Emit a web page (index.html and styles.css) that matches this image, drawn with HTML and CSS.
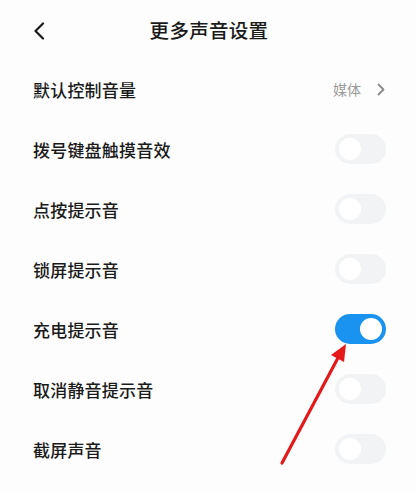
FILE: index.html
```html
<!DOCTYPE html>
<html lang="zh-CN">
<head>
<meta charset="utf-8">
<link rel="stylesheet" href="styles.css">
</head>
<body>
<div class="page">
  <header class="header">
    <svg class="back" width="12" height="18" viewBox="0 0 12 18"><path d="M10 1.5 L2.5 9 L10 16.5" fill="none" stroke="#1a1a1a" stroke-width="2.2" stroke-linecap="round" stroke-linejoin="round"/></svg>
    <h1 class="title">更多声音设置</h1>
  </header>
  <ul class="list">
    <li class="row"><span class="label">默认控制音量</span><span class="value">媒体<svg class="chev" width="8" height="13" viewBox="0 0 8 13"><path d="M1.5 1.5 L6.5 6.5 L1.5 11.5" fill="none" stroke="#8a8a8a" stroke-width="1.8" stroke-linecap="round" stroke-linejoin="round"/></svg></span></li>
    <li class="row"><span class="label">拨号键盘触摸音效</span><span class="toggle"><span class="knob"></span></span></li>
    <li class="row"><span class="label">点按提示音</span><span class="toggle"><span class="knob"></span></span></li>
    <li class="row"><span class="label">锁屏提示音</span><span class="toggle"><span class="knob"></span></span></li>
    <li class="row"><span class="label">充电提示音</span><span class="toggle on"><span class="knob"></span></span></li>
    <li class="row"><span class="label">取消静音提示音</span><span class="toggle"><span class="knob"></span></span></li>
    <li class="row"><span class="label">截屏声音</span><span class="toggle"><span class="knob"></span></span></li>
  </ul>
  <svg class="arrow" width="416" height="492" viewBox="0 0 416 492">
    <line x1="282" y1="463" x2="339" y2="356" stroke="#e41a1a" stroke-width="3.2" stroke-linecap="round"/>
    <polygon points="346,344 331,355 344,362" fill="#e41a1a"/>
  </svg>
</div>
</body>
</html>
```
FILE: styles.css
```css
html, body { margin: 0; padding: 0; background: #fdfdfd; }
body { font-family: "Noto Sans CJK SC", "Noto Sans", sans-serif; color: #1a1a1a; }
.page { position: relative; width: 416px; height: 492px; overflow: hidden; }
.header { height: 59px; display: flex; align-items: center; justify-content: center; position: relative; }
.back { position: absolute; left: 33px; top: 22px; }
.title { margin: 0; font-size: 19.5px; font-weight: 500; letter-spacing: 0.3px; padding-left: 2px; }
.list { list-style: none; margin: 0; padding: 0; }
.row { height: 60px; display: flex; align-items: center; justify-content: space-between; padding: 0 30px 0 33px; }
.label { font-size: 17px; font-weight: 500; letter-spacing: 0.2px; }
.value { display: flex; align-items: center; gap: 16px; font-size: 14px; color: #9a9a9a; padding-right: 1px; }
.toggle { width: 51px; height: 30px; border-radius: 15px; background: #f2f3f4; position: relative; box-sizing: border-box; margin-right: 0; }
.knob { position: absolute; left: 4px; top: 4px; width: 22px; height: 22px; border-radius: 50%; background: #fff; }
.toggle.on { background: #1a93f0; }
.toggle.on .knob { left: 25px; }
.arrow { position: absolute; left: 0; top: 0; pointer-events: none; }
```
